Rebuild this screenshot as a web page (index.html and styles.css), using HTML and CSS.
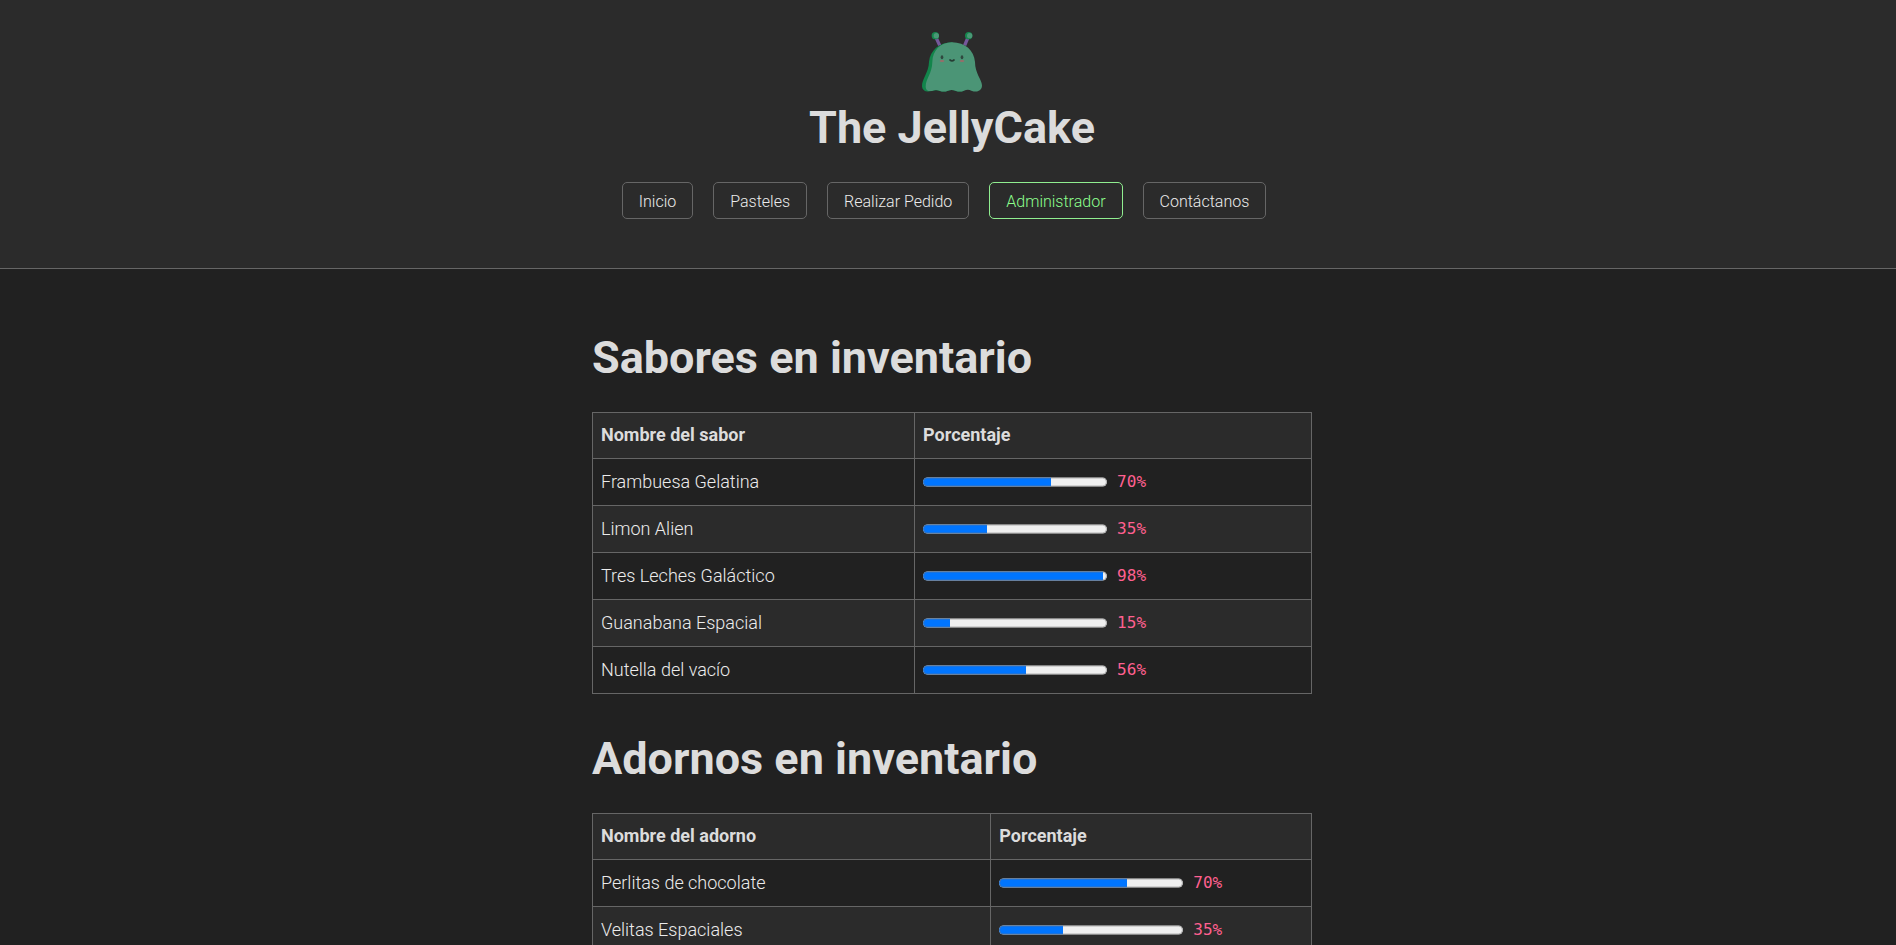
FILE: index.html
```html
<!DOCTYPE html>
<html lang="es">
<head>
<meta charset="utf-8">
<meta name="viewport" content="width=device-width, initial-scale=1">
<title>The JellyCake</title>
<link rel="stylesheet" href="styles.css">
</head>
<body>
<header class="site-header">
  <svg class="logo" viewBox="66 36 180 180" role="img" aria-label="Jelly">
    <path d="M108 52L119 76M204 52L194 76" stroke="#75589b" stroke-width="10" fill="none"/>
    <circle cx="106" cy="47" r="11" fill="#16884f"/>
    <circle cx="109" cy="47" r="8" fill="#4b9877"/>
    <circle cx="206" cy="47" r="11" fill="#16884f"/>
    <circle cx="209" cy="47" r="8" fill="#4b9877"/>
    <path d="M156 67C118 67 90 92 87 126C86 158 66 176 66 198C67 216 84 216 96 213Q108 208 120 213Q132 217 144 212Q156 208 168 213Q180 217 192 212L190 90Z" fill="#12854b"/>
    <path d="M156 67C121 67 98 92 97 126C96 162 77 176 77 200C78 212 86 214 96 213Q108 207 120 213Q132 217 144 212Q156 207 168 213Q180 217 192 212Q204 207 214 212C232 219 246 212 246 196C245 178 225 160 225 126C222 92 196 67 156 67Z" fill="#4b9576"/>
    <ellipse cx="126" cy="112" rx="4" ry="6" fill="#30483f"/>
    <ellipse cx="186" cy="112" rx="4" ry="6" fill="#30483f"/>
    <ellipse cx="126" cy="123" rx="7" ry="3" fill="#9a6c6a"/>
    <ellipse cx="186" cy="123" rx="7" ry="3" fill="#9a6c6a"/>
    <path d="M150 120Q156 125 162 120" stroke="#263d34" stroke-width="5" stroke-linecap="round" fill="none"/>
  </svg>
  <h1 class="title">The JellyCake</h1>
  <nav class="nav">
    <a class="nav-link" href="#inicio">Inicio</a>
    <a class="nav-link" href="#pasteles">Pasteles</a>
    <a class="nav-link" href="#pedido">Realizar Pedido</a>
    <a class="nav-link current" href="#admin" aria-current="page">Administrador</a>
    <a class="nav-link" href="#contacto">Contáctanos</a>
  </nav>
</header>
<main class="content">
  <h1 class="title">Sabores en inventario</h1>
  <table class="stock flavours">
    <thead><tr><th scope="col">Nombre del sabor</th><th scope="col">Porcentaje</th></tr></thead>
    <tbody>
      <tr><td>Frambuesa Gelatina</td><td><label class="level"><progress max="100" value="70"></progress><code>70%</code></label></td></tr>
      <tr><td>Limon Alien</td><td><label class="level"><progress max="100" value="35"></progress><code>35%</code></label></td></tr>
      <tr><td>Tres Leches Galáctico</td><td><label class="level"><progress max="100" value="98"></progress><code>98%</code></label></td></tr>
      <tr><td>Guanabana Espacial</td><td><label class="level"><progress max="100" value="15"></progress><code>15%</code></label></td></tr>
      <tr><td>Nutella del vacío</td><td><label class="level"><progress max="100" value="56"></progress><code>56%</code></label></td></tr>
    </tbody>
  </table>
  <h1 class="title">Adornos en inventario</h1>
  <table class="stock toppings">
    <thead><tr><th scope="col">Nombre del adorno</th><th scope="col">Porcentaje</th></tr></thead>
    <tbody>
      <tr><td>Perlitas de chocolate</td><td><label class="level"><progress max="100" value="70"></progress><code>70%</code></label></td></tr>
      <tr><td>Velitas Espaciales</td><td><label class="level"><progress max="100" value="35"></progress><code>35%</code></label></td></tr>
    </tbody>
  </table>
</main>
</body>
</html>
```

FILE: styles.css
```css
* {
  box-sizing: border-box;
}

body {
  margin: 0;
  background: #212121;
  color: #dcdcdc;
  font-family: Roboto, sans-serif;
  font-size: 18px;
  font-weight: 300;
  line-height: 28px;
}

.site-header {
  display: flex;
  flex-direction: column;
  align-items: center;
  padding: 32px 0 49px 8px;
  background: #2b2b2b;
  border-bottom: 1px solid #666;
}

.logo {
  width: 60px;
  height: 60px;
}

.title {
  margin: 0;
  font-size: 45px;
  font-weight: 700;
  line-height: 52px;
}

.site-header .title {
  margin: 10px 0 28px;
}

.nav {
  display: flex;
  flex-wrap: wrap;
  justify-content: center;
  gap: 20px;
  padding-right: 16px;
}

.nav-link {
  padding: 6px 16px 4px;
  border: 1px solid #666;
  border-radius: 5px;
  color: #ececec;
  font-size: 16px;
  line-height: 25px;
  text-decoration: none;
}

.nav-link.current {
  border-color: #90ee90;
  color: #8dff8d;
}

.content {
  max-width: 728px;
  margin: 0 auto;
  padding: 24px 0 48px 8px;
}

.content .title {
  margin: 39px 0 28px;
}

.stock {
  width: 100%;
  border-collapse: collapse;
}

.stock th,
.stock td {
  padding: 9px 8px;
  border: 1px solid #666;
  text-align: left;
}

.stock td {
  color: #ececec;
}

.stock th {
  padding: 8px 8px 9px;
  background: #2b2b2b;
  font-weight: 700;
}

.stock tbody tr:nth-child(even) {
  background: #2b2b2b;
}

.flavours th:first-child {
  width: 44.8%;
}

.toppings th:first-child {
  width: 55.4%;
}

.level {
  display: flex;
  align-items: center;
  gap: 10px;
}

.level progress {
  width: 184px;
  height: 18px;
}

.level code {
  color: #ff6090;
  font-family: "DejaVu Sans Mono", monospace;
  font-size: 16px;
}
```
